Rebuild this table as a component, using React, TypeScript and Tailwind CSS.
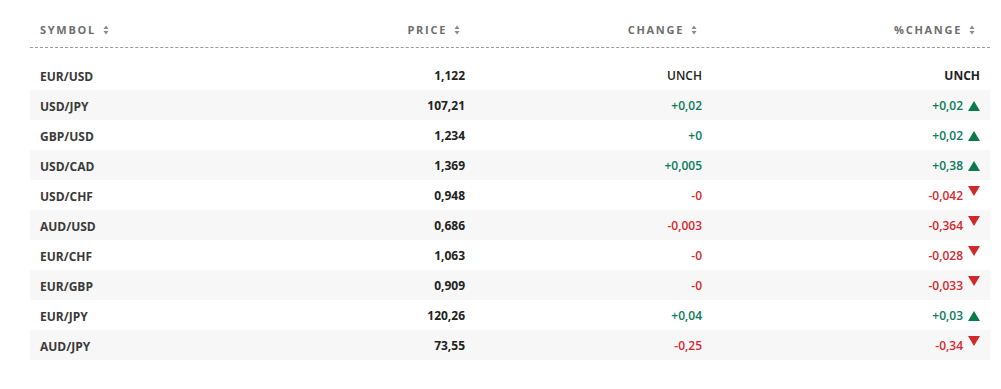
import React from "react";

type Row = {
  symbol: string;
  price: string;
  change: string;
  pct: string;
  dir: "up" | "down" | "none";
};

const rows: Row[] = [
  { symbol: "EUR/USD", price: "1,122", change: "UNCH", pct: "UNCH", dir: "none" },
  { symbol: "USD/JPY", price: "107,21", change: "+0,02", pct: "+0,02", dir: "up" },
  { symbol: "GBP/USD", price: "1,234", change: "+0", pct: "+0,02", dir: "up" },
  { symbol: "USD/CAD", price: "1,369", change: "+0,005", pct: "+0,38", dir: "up" },
  { symbol: "USD/CHF", price: "0,948", change: "-0", pct: "-0,042", dir: "down" },
  { symbol: "AUD/USD", price: "0,686", change: "-0,003", pct: "-0,364", dir: "down" },
  { symbol: "EUR/CHF", price: "1,063", change: "-0", pct: "-0,028", dir: "down" },
  { symbol: "EUR/GBP", price: "0,909", change: "-0", pct: "-0,033", dir: "down" },
  { symbol: "EUR/JPY", price: "120,26", change: "+0,04", pct: "+0,03", dir: "up" },
  { symbol: "AUD/JPY", price: "73,55", change: "-0,25", pct: "-0,34", dir: "down" },
];

const SortIcon = () => (
  <svg width="6" height="10" viewBox="0 0 6 10" className="ml-[7px]">
    <path d="M3 0.5 L5.5 4 L0.5 4 Z" fill="#8a8a8a" />
    <path d="M3 9.5 L5.5 6 L0.5 6 Z" fill="#8a8a8a" />
  </svg>
);

const Arrow = ({ dir }: { dir: "up" | "down" }) =>
  dir === "up" ? (
    <svg width="12" height="10" viewBox="0 0 12 10" className="ml-[5px]">
      <path d="M6 0 L12 10 L0 10 Z" fill="#0b7a4b" />
    </svg>
  ) : (
    <svg width="12" height="10" viewBox="0 0 12 10" className="ml-[5px] mb-[10px]">
      <path d="M0 0 L12 0 L6 10 Z" fill="#cf2a2a" />
    </svg>
  );

const colorFor = (v: string) => {
  if (v.startsWith("+")) return "text-[#0b7a5a]";
  if (v.startsWith("-")) return "text-[#d3282e]";
  return "text-[#222]";
};

const Header = ({ label, right }: { label: string; right?: boolean }) => (
  <div
    className={`flex items-center ${right ? "justify-end pr-[15px]" : "pl-[10px]"}`}
  >
    <span className="text-[11px] font-bold tracking-[1.7px] text-[#6e6e6e]">{label}</span>
    <SortIcon />
  </div>
);

export default function App() {
  return (
    <div
      className="w-[1001px] h-[389px] bg-white pl-[30px] pt-[13px] overflow-hidden"
      style={{ fontFamily: '"Open Sans", "Liberation Sans", sans-serif' }}
    >
      <div className="w-[960px] grid grid-cols-[200px_245px_237px_278px] h-[35px] border-b border-dashed border-[#9a9a9a]">
        <Header label="SYMBOL" />
        <Header label="PRICE" right />
        <Header label="CHANGE" right />
        <Header label="%CHANGE" right />
      </div>

      <div className="w-[960px] mt-[12px]">
        {rows.map((r, i) => (
          <div
            key={r.symbol}
            className={`grid grid-cols-[200px_245px_237px_278px] h-[30px] items-center pt-[2px] text-[12px] font-bold ${
              i % 2 === 1 ? "bg-[#f7f7f7]" : "bg-white"
            }`}
          >
            <div className="pl-[10px] pt-[1px] text-[#3a3a3a]">{r.symbol}</div>
            <div className="pr-[10px] text-right text-[#222]">{r.price}</div>
            <div className={`pr-[10px] text-right font-semibold ${colorFor(r.change)}`}>
              {r.change}
            </div>
            <div className="pr-[10px] flex items-center justify-end">
              <span className={r.dir === "none" ? "text-[#222]" : `font-semibold ${colorFor(r.pct)}`}>
                {r.pct}
              </span>
              {r.dir !== "none" && <Arrow dir={r.dir} />}
            </div>
          </div>
        ))}
      </div>
    </div>
  );
}
